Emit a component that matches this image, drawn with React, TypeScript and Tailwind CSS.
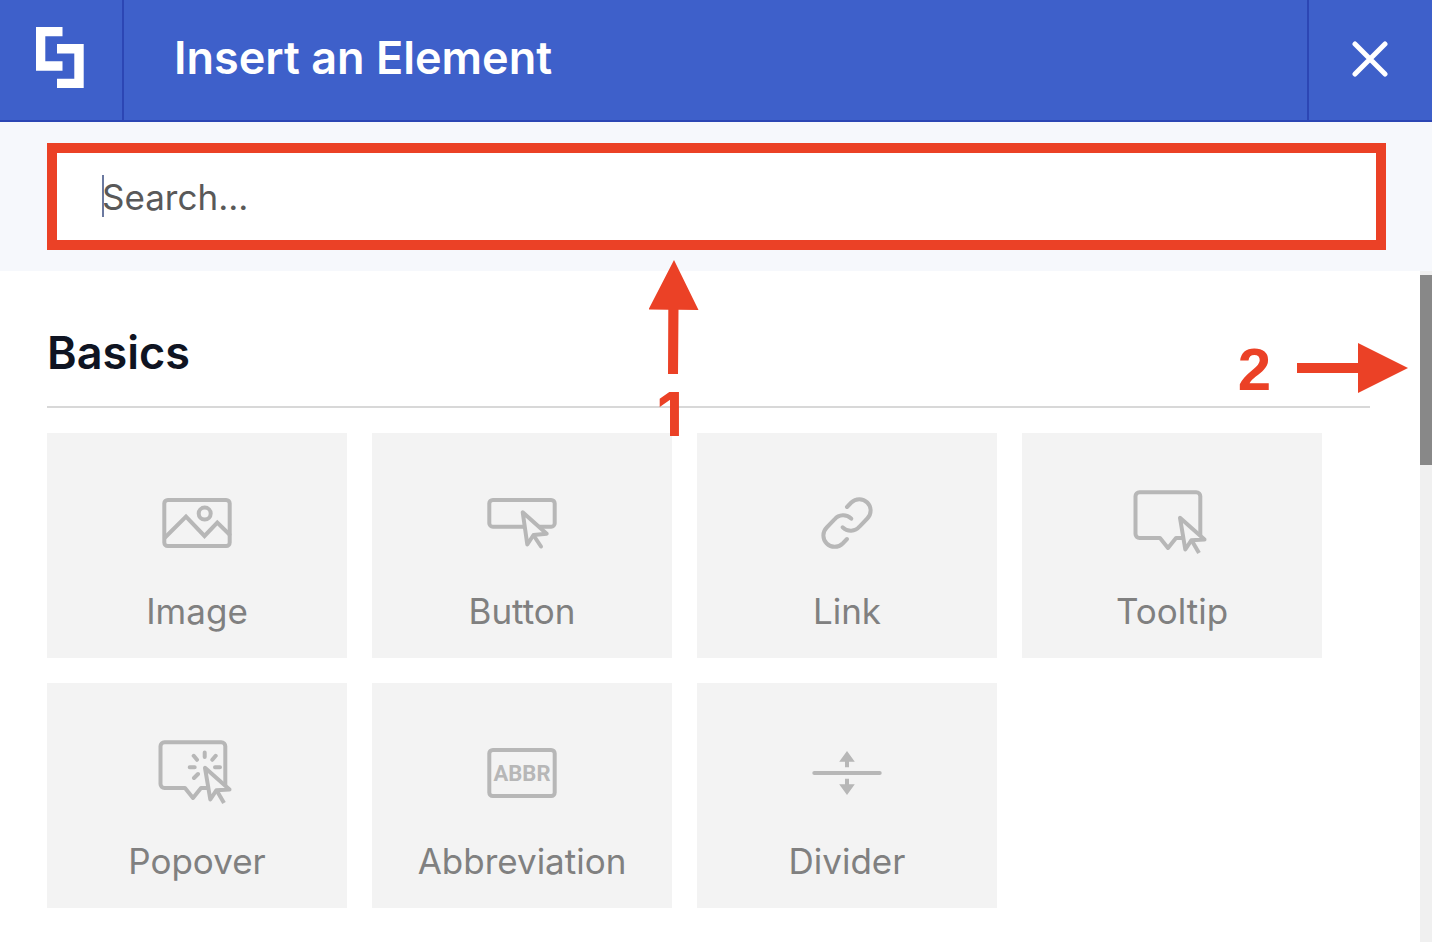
import React from "react";

type Tile = { label: string; icon: React.ReactNode };

function Icon({ children }: { children: React.ReactNode }) {
  return (
    <svg
      viewBox="0 0 80 80"
      className="size-20"
      fill="none"
      stroke="#b7b7b7"
      strokeWidth="4"
      strokeLinecap="round"
      strokeLinejoin="round"
      aria-hidden="true"
    >
      {children}
    </svg>
  );
}

function Bubble() {
  return (
    <>
      <path
        d="M68.3 52V13.2a4 4 0 0 0-4-4H7.5a4 4 0 0 0-4 4V51a4 4 0 0 0 4 4H28L36 65L44 55H50"
        strokeLinecap="butt"
      />
      <path d="M48 34.8L53.3 66.5L59.3 57.3L72.5 56.5Z" fill="#f3f3f3" />
      <path d="M60 58L67 70" strokeLinecap="butt" />
    </>
  );
}

const tiles: Tile[] = [
  {
    label: "Image",
    icon: (
      <Icon>
        <rect x="7.3" y="17" width="65.4" height="46" rx="3.5" />
        <path d="M8 54.5L29 33.5L47.5 53L60.3 39.5L72.5 51.5" strokeLinejoin="miter" />
        <circle cx="47.7" cy="30.6" r="6" />
      </Icon>
    ),
  },
  {
    label: "Button",
    icon: (
      <Icon>
        <rect x="7.3" y="17" width="65.4" height="26.7" rx="3.5" />
        <path d="M40.7 29.3L45.3 61.5L51.5 52L64.7 50.7Z" fill="#f3f3f3" />
        <path d="M52 53L59 63.5" />
      </Icon>
    ),
  },
  {
    label: "Link",
    icon: (
      <Icon>
        <path d="M40 24L44.3 19.5A11.3 11.3 0 1 1 60.3 35.5L52.5 43.6A11.3 11.3 0 0 1 35.7 44.3" />
        <path
          d="M40 24L44.3 19.5A11.3 11.3 0 1 1 60.3 35.5L52.5 43.6A11.3 11.3 0 0 1 35.7 44.3"
          transform="rotate(180 40 40)"
        />
      </Icon>
    ),
  },
  {
    label: "Tooltip",
    icon: (
      <Icon>
        <Bubble />
      </Icon>
    ),
  },
  {
    label: "Popover",
    icon: (
      <Icon>
        <Bubble />
        <path d="M47.7 19.5V24M36.7 22.8L40 26.8M58.7 22.8L55.3 26.8M32.7 34.3H37.7M58 34.3H63M41 41L37 45" />
      </Icon>
    ),
  },
  {
    label: "Abbreviation",
    icon: (
      <Icon>
        <rect x="7.3" y="17" width="65.4" height="46" rx="3.5" />
        <text
          x="40"
          y="48"
          textAnchor="middle"
          fill="#b7b7b7"
          stroke="none"
          className="font-['Roboto',sans-serif] text-[22px] font-bold"
        >
          ABBR
        </text>
      </Icon>
    ),
  },
  {
    label: "Divider",
    icon: (
      <Icon>
        <path d="M7.3 40H72.7" />
        <path
          d="M40 18L47.8 28.7H42V34.3H38V28.7H32.2ZM40 62L47.8 51.3H42V45.7H38V51.3H32.2Z"
          fill="#b7b7b7"
          stroke="none"
        />
      </Icon>
    ),
  },
];

export default function App() {
  return (
    <div className="relative flex min-h-screen flex-col bg-white font-['Inter',sans-serif]">
      <header className="flex h-[122px] border-b-2 border-[#2c46b4] bg-[#3e60ca] text-white">
        <div className="flex w-[124px] items-center border-r-2 border-[#2c46b4] pb-1.5 pl-9">
          <svg viewBox="0 0 48 61" className="h-[61px] w-12" fill="#fff" aria-hidden="true">
            <path d="M0 0H26.5V9.3H9.3V34.3H26.5V43.8H0Z" />
            <path d="M21 17H47.7V61H21V51.7H38.3V26.5H21Z" />
          </svg>
        </div>
        <h1 className="flex flex-1 items-center pb-1 pl-[50px] text-[45px] font-semibold">
          Insert an Element
        </h1>
        <button
          type="button"
          aria-label="Close"
          className="flex w-[125px] items-center justify-center border-l-2 border-[#2c46b4] pr-px pb-0.5"
        >
          <svg viewBox="0 0 36 36" className="size-9" stroke="#fff" strokeWidth="5" strokeLinecap="round">
            <path d="M3 3L33 33M33 3L3 33" />
          </svg>
        </button>
      </header>

      <div className="bg-[#f6f8fc] py-[21px] pr-[46px] pl-[47px]">
        <div className="relative">
          <input
            type="text"
            aria-label="Search"
            placeholder="Search..."
            className="block h-[107px] w-full border-10 border-[#eb4126] bg-white pl-[45px] text-[35px] text-[#595959] outline-none placeholder:text-[#595959]"
          />
          <span className="absolute top-8 left-[55px] h-[42px] w-0.5 bg-[#6b79a0]" />
        </div>
      </div>

      <div className="flex flex-1">
        <main className="flex-1 pr-[50px] pb-[34px] pl-[47px]">
          <h2 className="border-b-2 border-[#d8d8d8] pt-[54px] pb-[25px] text-[45px] leading-[56px] font-semibold text-[#0f1422]">
            Basics
          </h2>
          <div className="flex flex-wrap gap-[25px] pt-[25px]">
            {tiles.map((t) => (
              <button
                type="button"
                key={t.label}
                className="flex h-[225px] w-[300px] flex-col items-center bg-[#f3f3f3] pt-[50px] text-[35px] text-[#808080]"
              >
                {t.icon}
                <span className="mt-5 leading-14">{t.label}</span>
              </button>
            ))}
          </div>
        </main>
        <div className="w-3 bg-[#f0f0f0] pt-1">
          <div className="h-[190px] bg-[#888888]" />
        </div>
      </div>

      <svg viewBox="0 0 50 114" className="absolute top-[260px] left-[649px] h-[114px] w-[50px]" fill="#eb4126" aria-hidden="true">
        <path d="M25 0L49.5 50L29.5 49.8L29 114H19L19.3 49.8L-0.5 49.5Z" />
      </svg>
      <span className="absolute top-[384px] left-[657px] font-['Inter',sans-serif] text-[60px] leading-[60px] font-bold text-[#eb4126]">
        1
      </span>
      <span className="absolute top-[340px] right-[161px] font-['Liberation_Sans',Arial,sans-serif] text-[60px] leading-[60px] font-bold text-[#eb4126]">
        2
      </span>
      <svg viewBox="0 0 111 50" className="absolute top-[343px] right-6 h-[50px] w-[111px]" fill="#eb4126" aria-hidden="true">
        <path d="M0 20H61V0L111 25L61 50V30H0Z" />
      </svg>
    </div>
  );
}
